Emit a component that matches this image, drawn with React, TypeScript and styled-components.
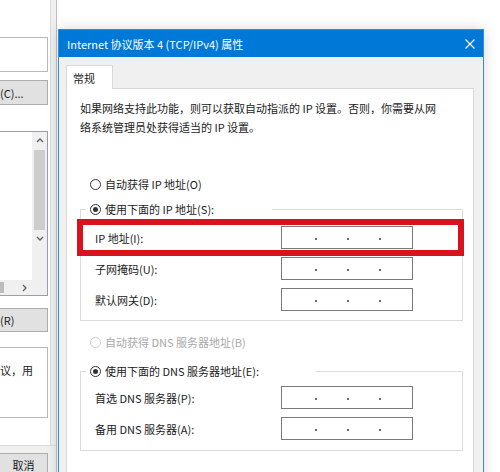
import styled, { createGlobalStyle } from 'styled-components';

const GlobalStyle = createGlobalStyle`
  html, body {
    margin: 0;
    padding: 0;
    background: #fff;
  }
  body {
    width: 500px;
    height: 472px;
    overflow: hidden;
    font-family: "Noto Sans CJK SC", "Noto Sans", sans-serif;
    font-size: 11px;
    color: #1b1b1b;
  }
  * {
    box-sizing: border-box;
  }
`;

const ipRows = [
  { label: 'IP 地址(I):', marked: true },
  { label: '子网掩码(U):' },
  { label: '默认网关(D):' },
];

const dnsRows = [{ label: '首选 DNS 服务器(P):' }, { label: '备用 DNS 服务器(A):' }];

const Chevron = ({ dir }: { dir: 'up' | 'down' | 'right' }) => {
  const points = {
    up: '1,5 4,2 7,5',
    down: '1,2 4,5 7,2',
    right: '2,1 5,4 2,7',
  }[dir];
  return (
    <svg width="8" height="8" viewBox="0 0 8 8">
      <polyline points={points} fill="none" stroke="#606060" strokeWidth="1.3" />
    </svg>
  );
};

const AddressInput = () => (
  <StyledAddressBox>
    <StyledDot />
    <StyledDot />
    <StyledDot />
  </StyledAddressBox>
);

const App = () => {
  return (
    <>
      <GlobalStyle />
      <StyledScreen>
        <StyledBackWindow>
          <StyledBackPanel>
            <StyledBackField $h={35} $mt={0} />
            <StyledBackButton $h={25} $mt={8}>
              (C)...
            </StyledBackButton>
            <StyledListBox>
              <StyledListArea />
              <StyledVScroll>
                <StyledScrollButton>
                  <Chevron dir="up" />
                </StyledScrollButton>
                <StyledVThumb />
                <StyledScrollButton>
                  <Chevron dir="down" />
                </StyledScrollButton>
              </StyledVScroll>
              <StyledHScroll>
                <StyledHThumb />
                <StyledScrollButton>
                  <Chevron dir="right" />
                </StyledScrollButton>
              </StyledHScroll>
              <StyledCorner />
            </StyledListBox>
            <StyledBackButton $h={24} $mt={12}>
              (R)
            </StyledBackButton>
            <StyledBackField $h={71} $mt={15}>
              议，用
            </StyledBackField>
          </StyledBackPanel>
          <StyledBackBar>
            <StyledBackButton $h={24} $mt={0} $center>
              取消
            </StyledBackButton>
          </StyledBackBar>
        </StyledBackWindow>

        <StyledStage>
          <StyledDialog>
            <StyledTitleBar>
              <span>Internet 协议版本 4 (TCP/IPv4) 属性</span>
              <svg width="10" height="10" viewBox="0 0 10 10">
                <path d="M0.5 0.5 L9.5 9.5 M9.5 0.5 L0.5 9.5" stroke="#fff" strokeWidth="1.1" />
              </svg>
            </StyledTitleBar>

            <StyledClient>
              <StyledTab>常规</StyledTab>
              <StyledPanel>
                <StyledDescription>
                  如果网络支持此功能，则可以获取自动指派的 IP 设置。否则，你需要从网
                  <br />
                  络系统管理员处获得适当的 IP 设置。
                </StyledDescription>

                <StyledOptionRow $mt={37}>
                  <StyledRadio />
                  自动获得 IP 地址(O)
                </StyledOptionRow>

                <StyledGroup $mt={5} $pb={9}>
                  <StyledCaption $w={186}>
                    <StyledCaptionInner>
                      <StyledRadio $checked />
                      使用下面的 IP 地址(S):
                    </StyledCaptionInner>
                  </StyledCaption>
                  {ipRows.map((row, i) => (
                    <StyledFieldRow key={row.label} $mt={i === 0 ? 7 : 8}>
                      <StyledFieldLabel>{row.label}</StyledFieldLabel>
                      <AddressInput />
                      {row.marked && <StyledHighlight />}
                    </StyledFieldRow>
                  ))}
                </StyledGroup>

                <StyledOptionRow $mt={11} $disabled>
                  <StyledRadio $disabled />
                  自动获得 DNS 服务器地址(B)
                </StyledOptionRow>

                <StyledGroup $mt={9} $pb={10}>
                  <StyledCaption $w={230}>
                    <StyledCaptionInner>
                      <StyledRadio $checked />
                      使用下面的 DNS 服务器地址(E):
                    </StyledCaptionInner>
                  </StyledCaption>
                  {dnsRows.map((row, i) => (
                    <StyledFieldRow key={row.label} $mt={i === 0 ? 5 : 8}>
                      <StyledFieldLabel>{row.label}</StyledFieldLabel>
                      <AddressInput />
                    </StyledFieldRow>
                  ))}
                </StyledGroup>
              </StyledPanel>
            </StyledClient>
          </StyledDialog>
        </StyledStage>
      </StyledScreen>
    </>
  );
};

export default App;

const StyledScreen = styled.div`
  display: flex;
  width: 500px;
  height: 472px;
  overflow: hidden;
  background: #fff;
`;

/* window behind the dialog, cut off at the left edge */
const StyledBackWindow = styled.div`
  width: 57px;
  flex-shrink: 0;
  display: flex;
  flex-direction: column;
  background: #f0f0f0;
  border-right: 1px solid #bfbfbf;
`;
const StyledBackPanel = styled.div`
  width: 51px;
  height: 445px;
  flex-shrink: 0;
  display: flex;
  flex-direction: column;
  padding-top: 37px;
  background: #fff;
  border-right: 1px solid #dadada;
`;
const StyledBackField = styled.div<{ $h: number; $mt: number }>`
  width: 48px;
  height: ${({ $h }) => $h}px;
  margin-top: ${({ $mt }) => $mt}px;
  padding-top: 13px;
  line-height: 19px;
  white-space: nowrap;
  overflow: hidden;
  background: #fff;
  border: 1px solid #b9b9b9;
  border-left: none;
`;
const StyledBackButton = styled.div<{ $h: number; $mt: number; $center?: boolean }>`
  width: 48px;
  height: ${({ $h }) => $h}px;
  margin-top: ${({ $mt }) => $mt}px;
  display: flex;
  align-items: center;
  justify-content: ${({ $center }) => ($center ? 'center' : 'flex-start')};
  white-space: nowrap;
  overflow: hidden;
  background: #e1e1e1;
  border: 1px solid #adadad;
  border-left: none;
`;
const StyledBackBar = styled.div`
  flex: 1;
  padding-top: 7px;
  border-top: 1px solid #dcdcdc;
`;
const StyledListBox = styled.div`
  width: 48px;
  height: 165px;
  margin-top: 26px;
  display: grid;
  grid-template-columns: 1fr 15px;
  grid-template-rows: 1fr 15px;
  background: #fff;
  border: 1px solid #9a9ea6;
  border-left: none;
`;
const StyledListArea = styled.div`
  background: #fff;
`;
const StyledVScroll = styled.div`
  display: flex;
  flex-direction: column;
  background: #f0f0f0;
`;
const StyledScrollButton = styled.div`
  width: 15px;
  height: 17px;
  flex-shrink: 0;
  display: flex;
  align-items: center;
  justify-content: center;
`;
const StyledVThumb = styled.div`
  height: 80px;
  margin: 1px 2px 0;
  background: #cdcdcd;
`;
const StyledHScroll = styled.div`
  display: flex;
  align-items: center;
  justify-content: space-between;
  background: #f0f0f0;
`;
const StyledHThumb = styled.div`
  width: 4px;
  height: 11px;
  background: #bcbcbc;
`;
const StyledCorner = styled.div`
  background: #f0f0f0;
`;

/* TCP/IPv4 dialog */
const StyledStage = styled.div`
  flex: 1;
  padding-top: 29px;
  padding-left: 1px;
`;
const StyledDialog = styled.div`
  width: 426px;
  height: 460px;
  display: flex;
  flex-direction: column;
  border: 1px solid #3a8ad6;
  box-shadow: 0 0 12px rgba(0, 0, 0, 0.16);
`;
const StyledTitleBar = styled.div`
  height: 27px;
  flex-shrink: 0;
  display: flex;
  align-items: center;
  justify-content: space-between;
  padding: 0 8px 0 8px;
  background: #0078d7;
  color: #fff;
  white-space: nowrap;
`;
const StyledClient = styled.div`
  flex: 1;
  display: flex;
  flex-direction: column;
  padding: 8px 9px 0 7px;
  background: #f0f0f0;
`;
const StyledTab = styled.div`
  position: relative;
  z-index: 1;
  align-self: flex-start;
  width: 47px;
  height: 24px;
  margin-bottom: -1px;
  padding: 0 6px;
  display: flex;
  align-items: center;
  background: #fff;
  border: 1px solid #d9d9d9;
  border-bottom: none;
`;
const StyledPanel = styled.div`
  flex: 1;
  padding: 10px 10px 0 13px;
  background: #fff;
  border: 1px solid #d9d9d9;
`;
const StyledDescription = styled.p`
  margin: 0;
  line-height: 19px;
  white-space: nowrap;
`;
const StyledOptionRow = styled.div<{ $mt: number; $disabled?: boolean }>`
  height: 20px;
  margin-top: ${({ $mt }) => $mt}px;
  padding-left: 10px;
  display: flex;
  align-items: center;
  gap: 4px;
  color: ${({ $disabled }) => ($disabled ? '#a8a8a8' : '#1b1b1b')};
  white-space: nowrap;
`;
const StyledRadio = styled.span<{ $checked?: boolean; $disabled?: boolean }>`
  position: relative;
  width: 11px;
  height: 11px;
  flex-shrink: 0;
  border-radius: 50%;
  background: #fff;
  border: 1px solid ${({ $disabled }) => ($disabled ? '#cfcfcf' : '#333')};

  &::after {
    content: '';
    display: ${({ $checked }) => ($checked ? 'block' : 'none')};
    position: absolute;
    left: 2px;
    top: 2px;
    width: 5px;
    height: 5px;
    border-radius: 50%;
    background: #333;
  }
`;
const StyledGroup = styled.fieldset<{ $mt: number; $pb: number }>`
  min-width: 0;
  margin: ${({ $mt }) => $mt}px 0 0;
  padding: 0 0 ${({ $pb }) => $pb}px 5px;
  border: 1px solid #dcdcdc;
`;
const StyledCaption = styled.legend<{ $w: number }>`
  width: ${({ $w }) => $w}px;
  height: 20px;
  padding: 0 0 0 4px;
  white-space: nowrap;
`;
const StyledCaptionInner = styled.span`
  height: 20px;
  display: flex;
  align-items: center;
  gap: 4px;
`;
const StyledFieldRow = styled.div<{ $mt: number }>`
  position: relative;
  height: 23px;
  margin-top: ${({ $mt }) => $mt}px;
  padding-left: 9px;
  display: flex;
  align-items: center;
`;
const StyledFieldLabel = styled.span`
  width: 186px;
  flex-shrink: 0;
  white-space: nowrap;
`;
const StyledAddressBox = styled.div`
  width: 132px;
  height: 23px;
  display: flex;
  align-items: center;
  justify-content: space-between;
  padding: 0 31px 0 33px;
  background: #fff;
  border: 1px solid #7a7a7a;
`;
const StyledDot = styled.span`
  width: 2px;
  height: 2px;
  margin-top: 3px;
  background: #6a6a6a;
`;
const StyledHighlight = styled.div`
  position: absolute;
  top: -7px;
  bottom: -7px;
  left: -9px;
  right: -2px;
  z-index: 2;
  border: 6px solid #d7131d;
  pointer-events: none;
`;
